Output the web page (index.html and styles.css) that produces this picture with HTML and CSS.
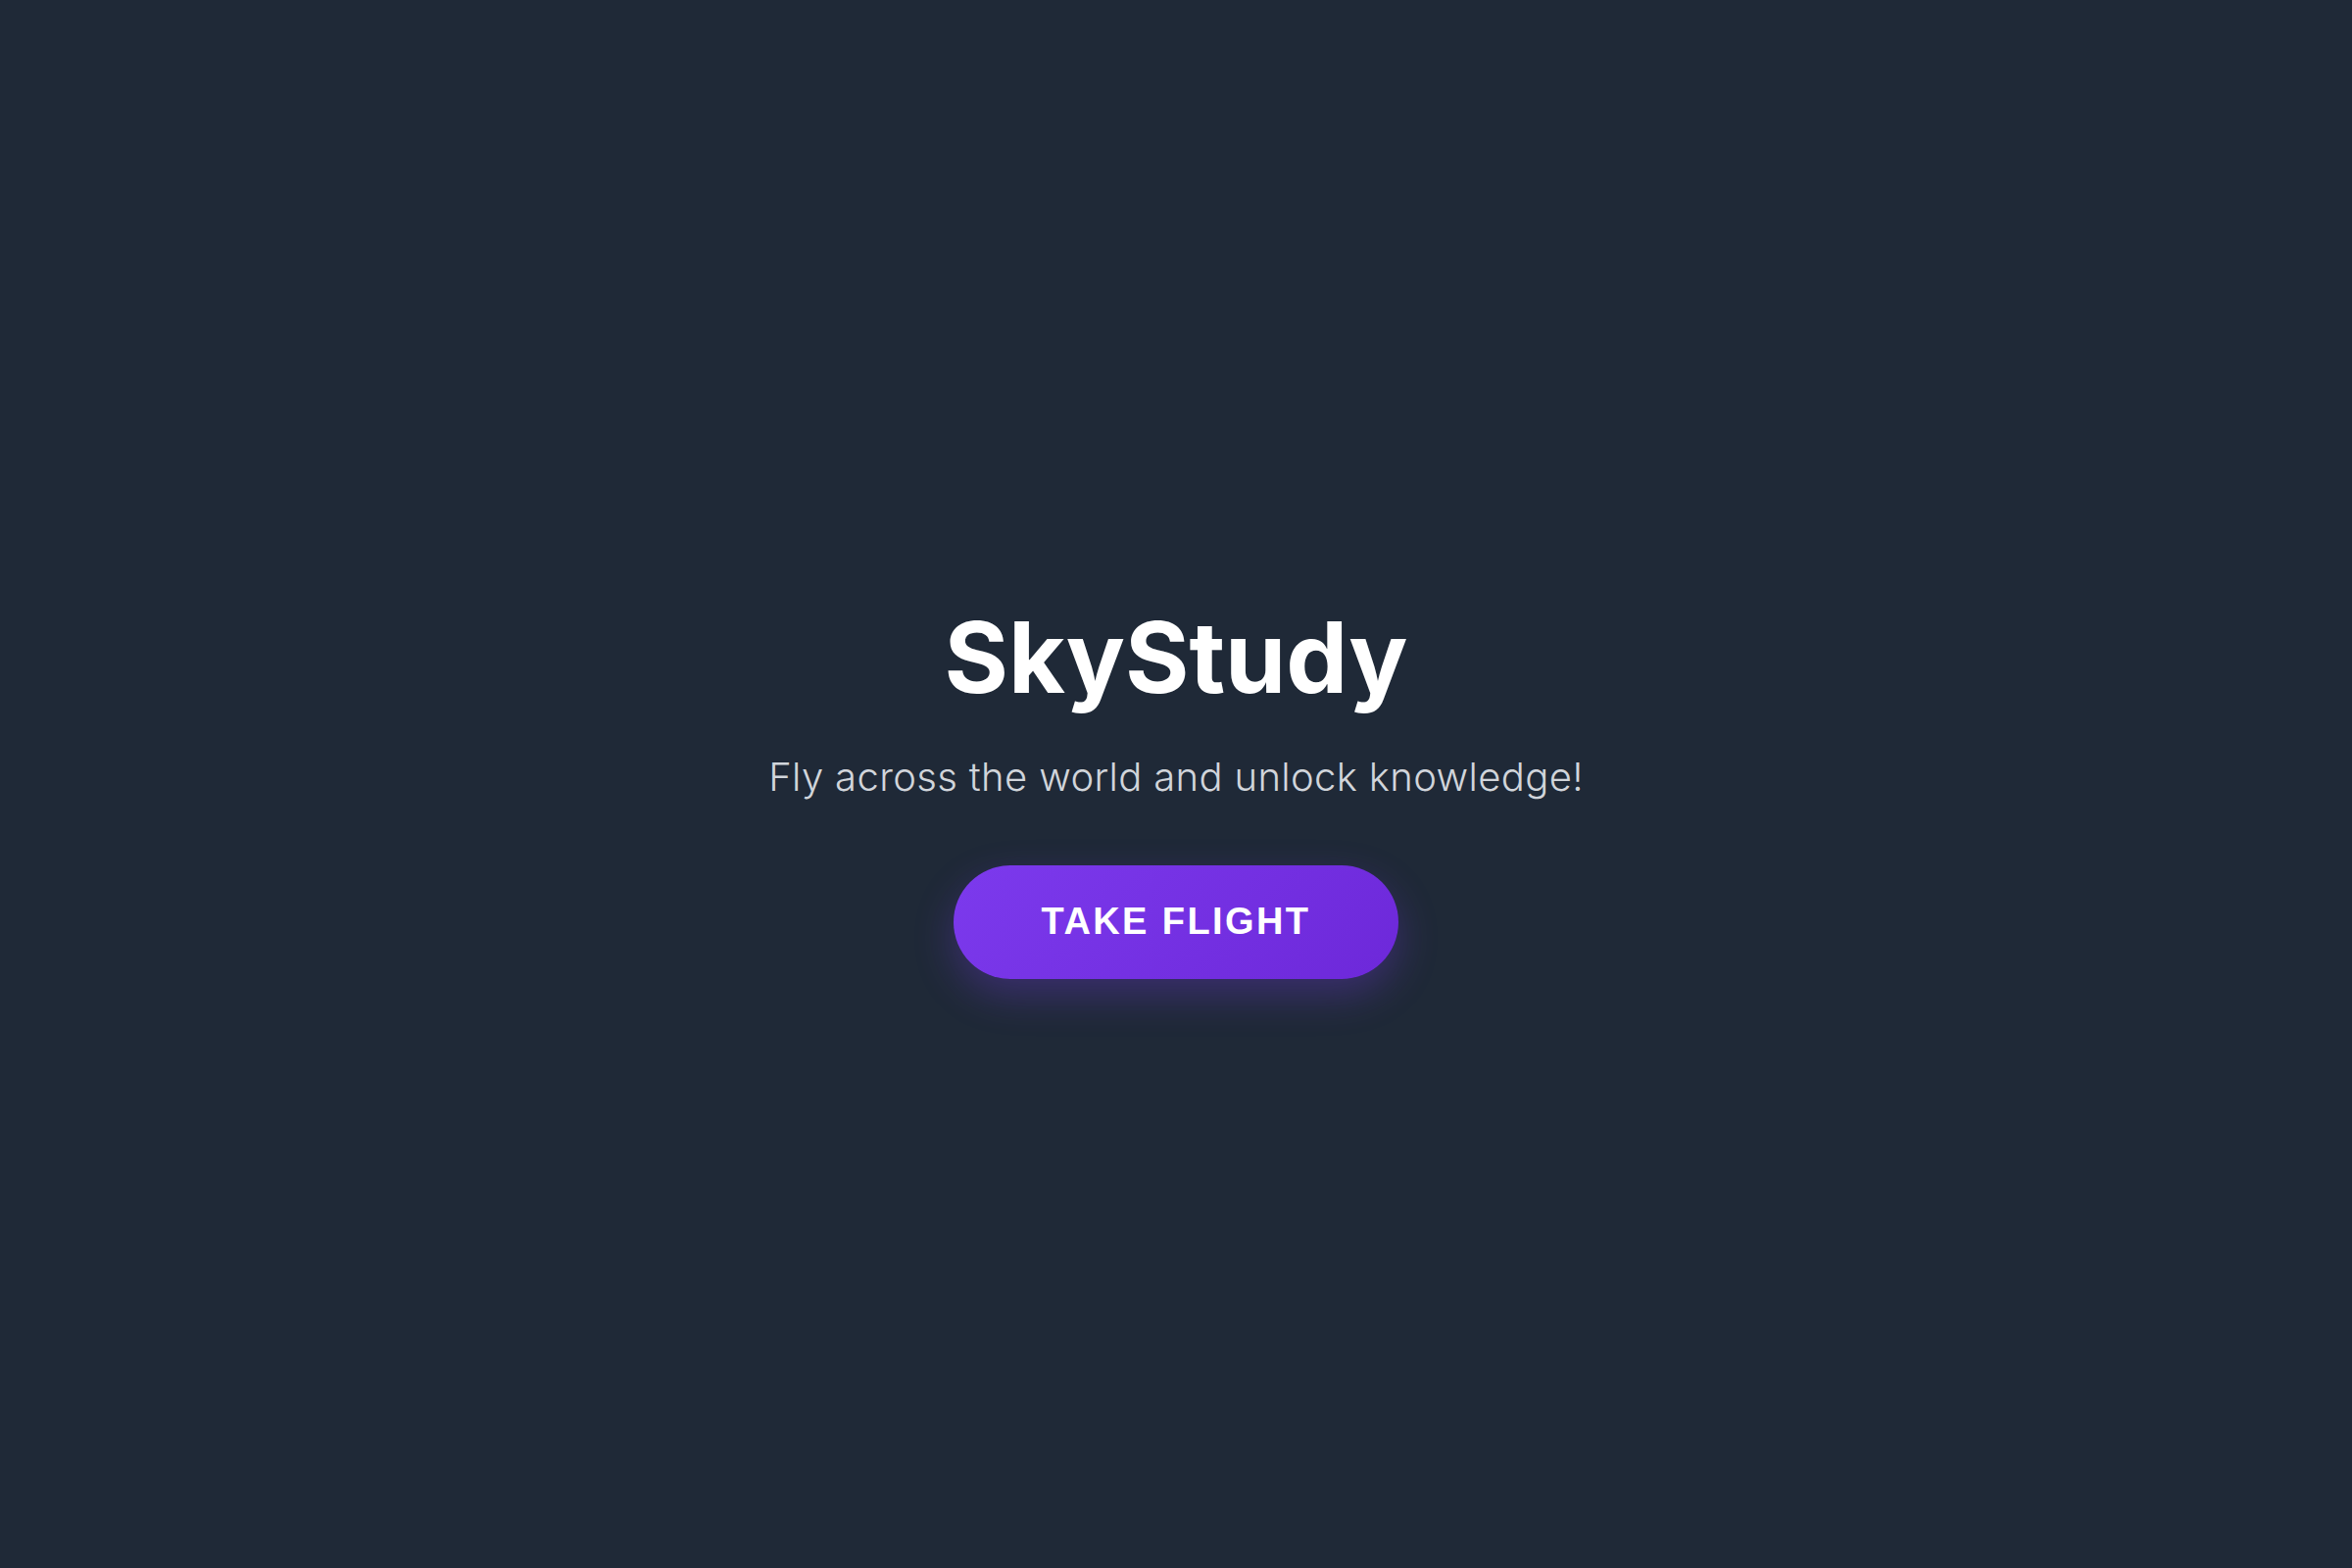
FILE: index.html
```html
<!DOCTYPE html>
<html lang="en">
<head>
<meta charset="utf-8">
<title>SkyStudy</title>
<link rel="stylesheet" href="styles.css">
</head>
<body>
<main class="hero">
  <h1 class="title">SkyStudy</h1>
  <p class="subtitle">Fly across the world and unlock knowledge!</p>
  <button class="cta" type="button">TAKE FLIGHT</button>
</main>
</body>
</html>
```

FILE: styles.css
```css
html, body {
  margin: 0;
  padding: 0;
  height: 100%;
}
body {
  background: #1f2937;
  font-family: "Inter", "Noto Sans", sans-serif;
}
.hero {
  box-sizing: border-box;
  height: 100vh;
  padding-top: 15px;
  display: flex;
  flex-direction: column;
  align-items: center;
  justify-content: center;
}
.title {
  margin: 0;
  font-family: "Inter", sans-serif;
  font-weight: 700;
  font-size: 100px;
  line-height: 108px;
  color: #ffffff;
  letter-spacing: 0;
}
.subtitle {
  margin: 38px 0 0;
  font-family: "Inter", sans-serif;
  font-weight: 300;
  font-size: 40px;
  line-height: 60px;
  letter-spacing: 0.35px;
  color: #d1d5db;
}
.cta {
  margin-top: 60px;
  border: none;
  border-radius: 999px;
  padding: 0 90px;
  height: 116px;
  background: linear-gradient(135deg, #7c3aed, #6d28d9);
  color: #ffffff;
  font-family: "Liberation Sans", Arial, sans-serif;
  font-weight: 700;
  font-size: 38px;
  letter-spacing: 2.4px;
  box-shadow: 0 16px 40px rgba(124, 58, 237, 0.3);
  cursor: pointer;
}
```
